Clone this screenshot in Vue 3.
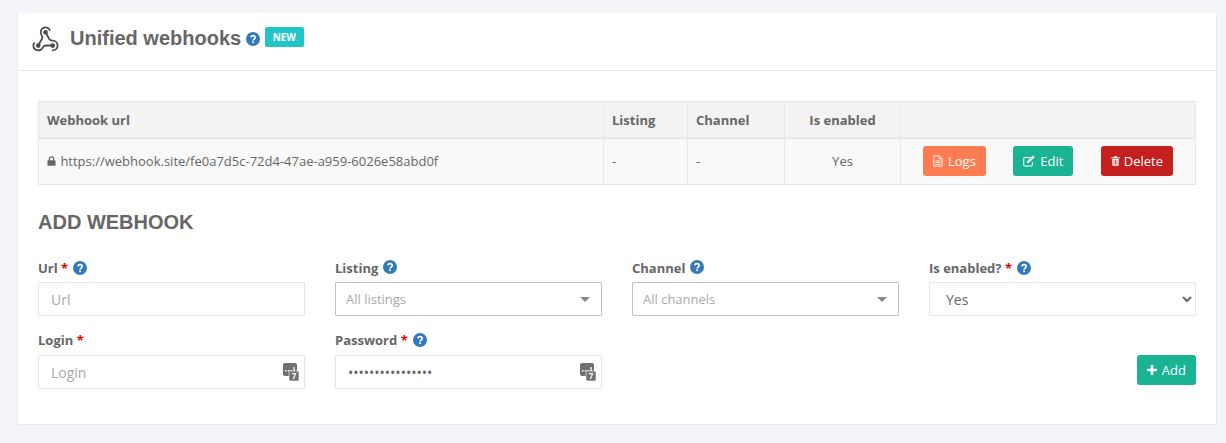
<script setup>
const rows = [
  { key: 'url', label: 'Url', req: true, help: true, type: 'input', ph: 'Url' },
  { key: 'listing', label: 'Listing', help: true, type: 'fake', ph: 'All listings' },
  { key: 'channel', label: 'Channel', help: true, type: 'fake', ph: 'All channels' },
  { key: 'enabled', label: 'Is enabled?', req: true, help: true, type: 'select' },
  { key: 'login', label: 'Login', req: true, type: 'input', ph: 'Login', kb: true },
  { key: 'password', label: 'Password', req: true, help: true, type: 'password', val: 'aaaaaaaaaaaaaaaa', kb: true }
]
</script>

<template>
  <div class="page">
    <section class="card">
      <header class="head">
        <svg class="hook" viewBox="0 0 24 24" width="29" height="29" fill="none" stroke="#4a4a4a" stroke-width="1.5" stroke-linecap="round" stroke-linejoin="round">
          <path d="M18 16.98h-5.99c-1.1 0-1.95.94-2.48 1.9A4 4 0 0 1 2 17c.01-.7.2-1.4.57-2" />
          <path d="m6 17 3.13-5.78c.53-.97.1-2.18-.5-3.1a4 4 0 1 1 6.89-4.06" />
          <path d="m12 6 3.13 5.73C15.66 12.7 16.9 13 18 13a4 4 0 0 1 0 8" />
          <circle cx="12" cy="6" r="1.2" />
          <circle cx="6" cy="17" r="1.2" />
          <circle cx="18" cy="17" r="1.2" />
        </svg>
        <h1>Unified webhooks</h1>
        <svg class="q q-title" viewBox="0 0 14 14" width="14" height="14"><circle cx="7" cy="7" r="7" fill="#337ab7" /><path d="M4.8 5.3c.2-1.1 1.1-1.7 2.2-1.7 1.2 0 2.2.8 2.2 1.9 0 1.6-2.1 1.6-2.1 3" fill="none" stroke="#fff" stroke-width="1.6" /><rect x="6.2" y="9.4" width="1.7" height="1.7" fill="#fff" /></svg>
        <span class="badge">NEW</span>
      </header>
      <div class="body">
        <table class="tbl">
          <thead>
            <tr>
              <th class="c1">Webhook url</th>
              <th class="c2">Listing</th>
              <th class="c3">Channel</th>
              <th class="c4 mid">Is enabled</th>
              <th class="c5"></th>
            </tr>
          </thead>
          <tbody>
            <tr>
              <td>
                <svg class="lock" viewBox="0 0 10 11" width="9" height="10"><path d="M2.6 5V3.3a2.4 2.4 0 0 1 4.8 0V5" fill="none" stroke="#666" stroke-width="1.4" /><rect x="0.5" y="4.8" width="9" height="6" rx="0.8" fill="#666" /></svg>
                https://webhook.site/fe0a7d5c-72d4-47ae-a959-6026e58abd0f
              </td>
              <td>-</td>
              <td>-</td>
              <td class="mid">Yes</td>
              <td>
                <div class="acts">
                  <a class="btn logs">
                    <svg viewBox="0 0 12 14" width="10" height="12" fill="none" stroke="#fff" stroke-width="1.1"><path d="M1 .8h6.5L11 4.2V13.2H1z" /><path d="M7.3.8v3.6H11M3 7h6M3 9h6M3 11h6" /></svg>
                    Logs
                  </a>
                  <a class="btn green">
                    <svg viewBox="0 0 14 14" width="12" height="12" fill="none" stroke="#fff" stroke-width="1.2"><path d="M11 8.2v3a1.6 1.6 0 0 1-1.6 1.6H2.4A1.6 1.6 0 0 1 .8 11.2V4.4a1.6 1.6 0 0 1 1.6-1.6H8" /><path d="M4.6 9.4 5 7l6.6-6.4 2 2L7 9z" fill="#fff" stroke="none" /></svg>
                    Edit
                  </a>
                  <a class="btn red">
                    <svg viewBox="0 0 12 14" width="9" height="12"><path d="M0 2.2h12v1.2H0zM4 .6h4l.6 1.6H3.4z" fill="#fff" /><path d="M1.4 4h9.2l-.6 9.4H2z" fill="#fff" /><path d="M4 5.4v6.4M6 5.4v6.4M8 5.4v6.4" stroke="#c3201f" stroke-width=".9" /></svg>
                    Delete
                  </a>
                </div>
              </td>
            </tr>
          </tbody>
        </table>

        <h2>ADD WEBHOOK</h2>

        <form class="form" @submit.prevent>
          <div v-for="f in rows" :key="f.key" class="field">
            <label>
              {{ f.label }}
              <span v-if="f.req" class="req">*</span>
              <svg v-if="f.help" class="q" :class="{ plain: !f.req }" viewBox="0 0 14 14" width="14" height="14"><circle cx="7" cy="7" r="7" fill="#337ab7" /><path d="M4.8 5.3c.2-1.1 1.1-1.7 2.2-1.7 1.2 0 2.2.8 2.2 1.9 0 1.6-2.1 1.6-2.1 3" fill="none" stroke="#fff" stroke-width="1.6" /><rect x="6.2" y="9.4" width="1.7" height="1.7" fill="#fff" /></svg>
            </label>
            <div class="ctl">
              <input v-if="f.type === 'input'" class="inp" type="text" :placeholder="f.ph" />
              <input v-else-if="f.type === 'password'" class="inp pw" type="password" :value="f.val" />
              <select v-else-if="f.type === 'select'" class="inp sel"><option>Yes</option></select>
              <div v-else class="fake"><span>{{ f.ph }}</span><i class="caret"></i></div>
              <svg v-if="f.kb" class="kb" viewBox="0 0 16 18" width="16" height="18">
                <rect x="0" y="0" width="14" height="13" rx="2" fill="#707070" />
                <path d="M2 7h1.5v1.5H2zM4.8 7h1.5v1.5H4.8zM7.6 7h1.5v1.5H7.6zM10.4 4h1.3v4.5h-1.3z" fill="#fff" />
                <rect x="6" y="8" width="10" height="10" rx="1.6" fill="#707070" stroke="#fff" stroke-width=".6" />
                <text x="11" y="16" text-anchor="middle" font-size="8" font-weight="700" fill="#fff" font-family="'Open Sans',sans-serif">7</text>
              </svg>
            </div>
          </div>
          <div class="add-cell">
            <button class="btn green add" type="submit">
              <svg viewBox="0 0 10 10" width="10" height="10"><path d="M3.8 0h2.4v3.8H10v2.4H6.2V10H3.8V6.2H0V3.8h3.8z" fill="#fff" /></svg>
              Add
            </button>
          </div>
        </form>
      </div>
    </section>
  </div>
</template>

<style>
html, body { margin: 0; background: #f3f5f9; }
</style>

<style scoped>
.page {
  height: 443px;
  box-sizing: border-box;
  padding: 13px 9px 0 17px;
  background: #f3f5f9;
  font-family: "Open Sans", sans-serif;
  font-size: 13px;
  color: #666;
  overflow: hidden;
}
.card {
  height: 412px;
  box-sizing: border-box;
  background: #fff;
  border: 1px solid #e7e9ee;
  border-top: 0;
}
.head {
  height: 58px;
  box-sizing: border-box;
  border-bottom: 1px solid #e7e7e7;
  display: flex;
  align-items: flex-start;
  padding: 14px 0 0 13px;
}
.hook { margin-top: -2px; flex: none; }
h1 {
  margin: -1px 0 0 10px;
  font: 700 20px/24px "Liberation Sans", sans-serif;
  color: #666;
}
.q.q-title { margin: 5px 0 0 5px; }
.badge {
  margin: 0 0 0 5px;
  height: 20px;
  padding: 0 7.5px;
  background: #23c6c8;
  color: #fff;
  font-size: 10px;
  font-weight: 700;
  line-height: 20px;
  border-radius: 2px;
}
.body { padding: 30px 20px 0 20px; }
.tbl {
  width: 1158px;
  border-collapse: collapse;
  table-layout: fixed;
}
.tbl th, .tbl td {
  border: 1px solid #e7e7e7;
  padding: 0 8px;
  text-align: left;
  color: #666;
}
.tbl th { height: 35px; background: #f3f3f3; font-weight: 700; border-bottom-width: 2px; }
.tbl td { height: 43px; padding-bottom: 2px; background: #f9f9f9; }
.tbl .mid { text-align: center; }
.c1 { width: 548px; }
.c2 { width: 67px; }
.c3 { width: 80px; }
.c4 { width: 99px; }
.lock { margin-right: 1px; }
.acts { display: flex; justify-content: space-between; padding: 0 14px 0 14px; }
.btn {
  display: inline-flex;
  align-items: center;
  gap: 5px;
  height: 30px;
  box-sizing: border-box;
  padding: 0 10px;
  color: #fff;
  font: 400 13px "Open Sans", sans-serif;
  border: 0;
  border-radius: 3px;
}
.logs { background: #ff7b51; }
.green { background: #1ab394; }
.red { background: #c3201f; gap: 4px; }
h2 {
  margin: 25px 0 0;
  font: 700 20px/24px "Liberation Sans", sans-serif;
  color: #666;
}
.form {
  margin-top: 25px;
  display: grid;
  grid-template-columns: repeat(4, 267px);
  column-gap: 30px;
  row-gap: 15px;
}
.field label {
  display: block;
  height: 19px;
  margin-bottom: 4px;
  font-weight: 700;
  line-height: 19px;
  color: #666;
}
.field:nth-child(n+5) label { margin-bottom: 5px; }
.req { color: #e00; margin-right: 4px; }
.q { vertical-align: -2px; margin-left: 1px; }
.q.plain { vertical-align: -1px; }
.ctl { position: relative; }
.inp {
  display: block;
  width: 100%;
  height: 34px;
  box-sizing: border-box;
  border: 1px solid #e5e6e7;
  background: #fff;
  padding: 0 12px;
  font: 14px "Open Sans", sans-serif;
  color: #666;
  border-radius: 1px;
  outline: 0;
}
.inp::placeholder { color: #a9a9a9; }
.fake {
  height: 34px;
  box-sizing: border-box;
  border: 1px solid #c2c2c2;
  background: #fff;
  padding: 0 10px;
  display: flex;
  align-items: center;
  justify-content: space-between;
  color: #a9a9a9;
  border-radius: 1px;
}
.caret {
  width: 0;
  height: 0;
  border: 5px solid transparent;
  border-top: 5px solid #888;
  border-bottom: 0;
  margin-right: 1px;
}
.kb { position: absolute; right: 6px; top: 8px; overflow: visible; }
.add-cell {
  grid-column: 4;
  grid-row: 2;
  justify-self: end;
  padding-top: 24px;
}
.add { padding: 0 10px; }
</style>
